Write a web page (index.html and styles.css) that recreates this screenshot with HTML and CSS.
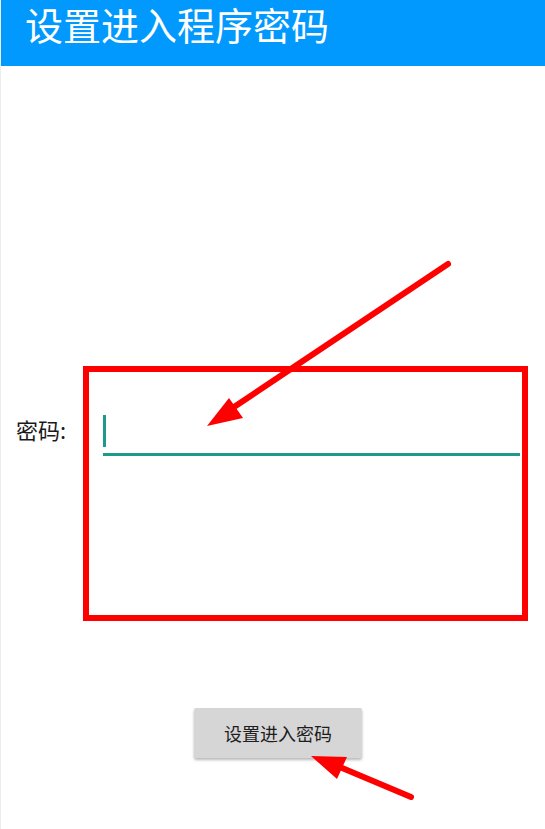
FILE: index.html
```html
<!DOCTYPE html>
<html lang="zh-CN">
<head>
<meta charset="utf-8">
<title>设置进入程序密码</title>
<link rel="stylesheet" href="styles.css">
</head>
<body>
<div class="page">
  <header class="appbar">
    <h1 class="title">设置进入程序密码</h1>
  </header>
  <main class="content">
    <div class="form-row">
      <label class="label" for="pwd">密码:</label>
      <div class="field" id="pwd"><span class="cursor"></span></div>
    </div>
    <div class="actions">
      <button class="btn" type="button">设置进入密码</button>
    </div>
  </main>
  <svg class="annotations" width="545" height="829" viewBox="0 0 545 829" xmlns="http://www.w3.org/2000/svg">
    <rect x="86" y="369" width="439" height="249" fill="none" stroke="#ff0000" stroke-width="6"/>
    <line x1="448" y1="264" x2="228" y2="411" stroke="#ff0000" stroke-width="6" stroke-linecap="round"/>
    <polygon points="207,426 229,398 243,418" fill="#ff0000"/>
    <line x1="411" y1="797" x2="335" y2="765" stroke="#ff0000" stroke-width="6" stroke-linecap="round"/>
    <polygon points="311,756 347,757 337,779" fill="#ff0000"/>
  </svg>
</div>
</body>
</html>
```

FILE: styles.css
```css
html, body {
  margin: 0;
  padding: 0;
  background: #ffffff;
}

body {
  font-family: "Noto Sans CJK SC", "Noto Sans", sans-serif;
}

.page {
  position: relative;
  width: 544px;
  height: 829px;
  border-left: 1px solid #ececec;
  overflow: hidden;
}

.appbar {
  height: 66px;
  box-sizing: border-box;
  padding: 0 0 0 24px;
  background: #0199fd;
}

.title {
  margin: 0;
  font-size: 38px;
  line-height: 48px;
  font-weight: 400;
  color: #ffffff;
  white-space: nowrap;
}

.content {
  display: flex;
  flex-direction: column;
}

.form-row {
  display: flex;
  align-items: flex-start;
  margin-top: 344px;
  padding-left: 15px;
}

.label {
  flex: 0 0 87px;
  margin-top: 5px;
  font-size: 22px;
  line-height: 28px;
  color: #1a1a1a;
}

.field {
  box-sizing: border-box;
  width: 417px;
  height: 46px;
  padding-top: 5px;
  border-bottom: 3px solid #1d9a8b;
}

.cursor {
  display: block;
  width: 3px;
  height: 32px;
  background: #1d9a8b;
}

.actions {
  display: flex;
  margin-top: 252px;
  padding-left: 193px;
}

.btn {
  width: 168px;
  height: 50px;
  border: none;
  border-radius: 2px;
  background: #d6d6d6;
  box-shadow: 0 2px 3px rgba(0, 0, 0, 0.28);
  font-family: "Noto Sans CJK SC", "Noto Sans", sans-serif;
  font-size: 18px;
  line-height: 26px;
  color: #1e1e1e;
  padding: 0;
}

.annotations {
  position: absolute;
  left: -1px;
  top: 0;
  pointer-events: none;
}
```
